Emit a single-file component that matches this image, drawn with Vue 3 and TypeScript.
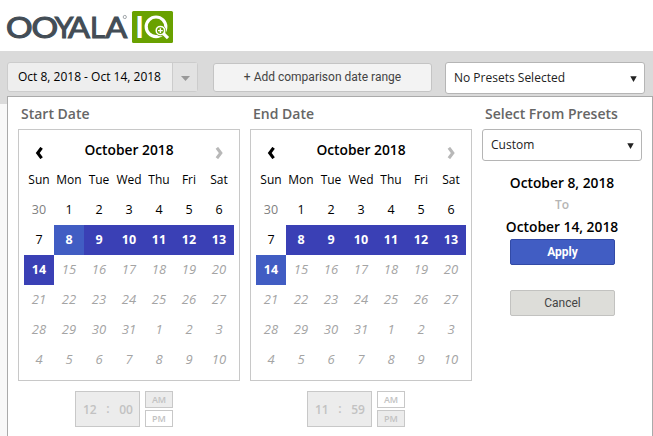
<script setup lang="ts">
interface Cell {
  label: number
  kind: 'prev' | 'day' | 'range' | 'edge' | 'off'
}
interface Calendar {
  title: string
  cells: Cell[]
  hour: string
  minute: string
  meridiem: 'AM' | 'PM'
}

const weekdays = ['Sun', 'Mon', 'Tue', 'Wed', 'Thu', 'Fri', 'Sat']

function buildCells(edge: number): Cell[] {
  const cells: Cell[] = [{ label: 30, kind: 'prev' }]
  for (let d = 1; d <= 31; d++) {
    let kind: Cell['kind'] = 'day'
    if (d === edge) kind = 'edge'
    else if (d >= 8 && d <= 14) kind = 'range'
    else if (d > 14) kind = 'off'
    cells.push({ label: d, kind })
  }
  for (let d = 1; d <= 10; d++) cells.push({ label: d, kind: 'off' })
  return cells
}

const calendars: Calendar[] = [
  { title: 'Start Date', cells: buildCells(8), hour: '12', minute: '00', meridiem: 'AM' },
  { title: 'End Date', cells: buildCells(14), hour: '11', minute: '59', meridiem: 'PM' },
]

// Wordmark letters with their own start and advance, for the wide round Os
const brand = [
  { letter: 'O', x: -0.9, width: 26.6 },
  { letter: 'O', x: 24.4, width: 26.6 },
  { letter: 'Y', x: 47.8, width: 18.6 },
  { letter: 'A', x: 61, width: 22 },
  { letter: 'L', x: 83, width: 15 },
  { letter: 'A', x: 98.2, width: 22 },
]
</script>

<template>
  <div class="page">
    <header class="header">
      <svg class="logo" width="170" height="40" viewBox="0 0 170 40">
        <text
          v-for="(b, i) in brand"
          :key="i"
          class="brand"
          :x="b.x"
          y="29.5"
          :textLength="b.width"
          lengthAdjust="spacingAndGlyphs"
        >{{ b.letter }}</text>
        <circle cx="117.800" cy="9" r="1.600" fill="none" stroke="#8b9297" stroke-width="0.800" />
        <rect x="125" y="3" width="41" height="32" rx="1.500" fill="#69a100" />
        <text class="iq" x="128.200" y="29.500">I</text>
        <circle cx="149" cy="18.800" r="9.800" fill="none" stroke="#fff" stroke-width="3.200" />
        <circle cx="153.400" cy="22.600" r="5.600" fill="#69a100" />
        <path d="M156 25.200L161 30.200" stroke="#fff" stroke-width="3.200" />
        <circle cx="153.400" cy="22.600" r="4.200" fill="#69a100" stroke="#fff" stroke-width="1.500" />
        <path d="M153.400 20.200v4.800M151 22.600h4.800" stroke="#fff" stroke-width="1.400" />
      </svg>
    </header>

    <div class="toolbar">
      <div class="range-button">
        <span class="range-text">Oct 8, 2018 - Oct 14, 2018</span>
        <span class="range-toggle">
          <svg width="9" height="5" viewBox="0 0 9 5"><path d="M0 0h9L4.500 5z" fill="#999" /></svg>
        </span>
      </div>
      <button class="compare" type="button">+ Add comparison date range</button>
      <div class="select main-select">
        <span>No Presets Selected</span>
        <svg width="7" height="6" viewBox="0 0 7 6"><path d="M.3.300h6.400L3.500 6z" fill="#222" /></svg>
      </div>
    </div>

    <main class="panel">
      <section v-for="cal in calendars" :key="cal.title" class="column">
        <h2>{{ cal.title }}</h2>
        <div class="calendar">
          <div class="month">
            <svg width="8" height="12" viewBox="0 0 8 12"><path d="M6.600 .8L2.700 6l3.900 5.200" fill="none" stroke="#000" stroke-width="3.100" /></svg>
            <span>October 2018</span>
            <svg width="8" height="12" viewBox="0 0 8 12"><path d="M1.900 .8l3.900 5.200-3.900 5.200" fill="none" stroke="#b8b8b8" stroke-width="3.100" /></svg>
          </div>
          <div class="grid">
            <span v-for="day in weekdays" :key="day" class="cell weekday">{{ day }}</span>
            <span v-for="(cell, i) in cal.cells" :key="i" class="cell date" :class="cell.kind">{{ cell.label }}</span>
          </div>
        </div>
        <div class="time">
          <div class="clock">
            <span>{{ cal.hour }}</span><span class="colon">:</span><span>{{ cal.minute }}</span>
          </div>
          <div class="meridiem">
            <span :class="{ on: cal.meridiem === 'AM' }">AM</span>
            <span :class="{ on: cal.meridiem === 'PM' }">PM</span>
          </div>
        </div>
      </section>

      <aside class="presets">
        <h2>Select From Presets</h2>
        <div class="select">
          <span>Custom</span>
          <svg width="7" height="6" viewBox="0 0 7 6"><path d="M.3.300h6.400L3.500 6z" fill="#222" /></svg>
        </div>
        <div class="summary">
          <strong>October 8, 2018</strong>
          <span class="to">To</span>
          <strong>October 14, 2018</strong>
        </div>
        <button class="action apply" type="button">Apply</button>
        <button class="action cancel" type="button">Cancel</button>
      </aside>
    </main>
  </div>
</template>

<style>
body {
  margin: 0;
  overflow: hidden;
}
</style>

<style scoped>
.page,
.page * {
  box-sizing: border-box;
}
.page {
  width: 653px;
  height: 436px;
  overflow: hidden;
  background: #f8f8f8;
  color: #000;
  font-family: 'Open Sans', sans-serif;
  font-size: 12px;
}
.header {
  height: 51px;
  padding: 8px 0 0 7px;
  background: #fff;
}
.logo {
  display: block;
  overflow: visible;
}
.brand {
  font-family: Lato, sans-serif;
  font-size: 29.5px;
  font-weight: 400;
  fill: #434d56;
  stroke: #434d56;
  stroke-width: 1.1px;
}
.iq {
  font-family: Lato, sans-serif;
  font-size: 29.5px;
  font-weight: 700;
  fill: #fff;
}
.toolbar {
  display: flex;
  align-items: flex-start;
  height: 53px;
  padding: 11px 8px 0 7px;
  background: #dadada;
}
.range-button {
  display: flex;
  width: 191px;
  height: 30px;
  border: 1px solid #ccc;
  border-radius: 3px;
  background: #eee;
}
.range-text {
  flex: 1;
  padding-left: 10px;
  line-height: 27px;
  white-space: nowrap;
}
.range-toggle {
  display: flex;
  align-items: center;
  justify-content: center;
  width: 25px;
  padding-top: 2px;
  border-left: 1px solid #ccc;
  background: #e2e2e2;
}
.compare {
  width: 219px;
  height: 29px;
  margin: 1px 0 0 15px;
  padding: 0 0 2px;
  border: 1px solid #c4c4c4;
  border-radius: 3px;
  background: #f3f3f3;
  color: #444;
  font: 12px Roboto, sans-serif;
}
.select {
  display: flex;
  align-items: center;
  justify-content: space-between;
  width: 160px;
  height: 32px;
  padding: 0 7px 0 8px;
  border: 1px solid #b5b5b5;
  border-radius: 3px;
  background: #fff;
  color: #222;
}
.select span {
  padding-bottom: 1px;
}
.select svg {
  margin-top: 2px;
}
.main-select {
  width: 200px;
  margin-left: 13px;
}
.panel {
  display: flex;
  width: 646px;
  height: 345px;
  margin: -8px 0 0 7px;
  padding: 0 10px;
  border: 1px solid #aaa;
  border-bottom: 0;
  background: #fff;
}
.column {
  width: 222px;
  margin-right: 10px;
}
h2 {
  height: 32px;
  margin: 0;
  padding-left: 3px;
  color: #666;
  font-size: 14px;
  font-weight: 600;
  line-height: 34px;
  white-space: nowrap;
}
.calendar {
  height: 252px;
  padding: 0 5px;
  border: 1px solid #c8c8c8;
}
.month {
  display: flex;
  align-items: center;
  justify-content: space-between;
  height: 35px;
  padding: 5px 11px 0;
  font-size: 13.8px;
  font-weight: 600;
}
.month span {
  padding-bottom: 1px;
}
.month svg {
  margin-top: 6px;
}
.grid {
  display: grid;
  grid-template-columns: repeat(7, 30px);
  grid-auto-rows: 30px;
}
.cell {
  line-height: 29px;
  text-align: center;
}
.date {
  font-size: 12.5px;
}
.prev {
  color: #808080;
}
.range,
.edge {
  background: #3a40b5;
  color: #fff;
  font-weight: 700;
}
.edge {
  background: #415dc3;
}
.off {
  color: #a4a4a4;
  font-size: 13px;
  font-style: italic;
}
.time {
  display: flex;
  gap: 5px;
  padding: 10px 0 0 57px;
}
.clock {
  display: flex;
  align-items: center;
  justify-content: space-between;
  width: 65px;
  height: 36px;
  padding: 0 6px 0 7px;
  border: 1px solid #c8c8c8;
  background: #ececec;
  color: #c2c2c2;
  font-weight: 600;
}
.colon {
  padding-bottom: 2px;
}
.meridiem {
  display: flex;
  flex-direction: column;
  gap: 2px;
}
.meridiem span {
  width: 28px;
  height: 17px;
  border: 1px solid #c8c8c8;
  color: #c2c2c2;
  font-size: 9px;
  font-weight: 600;
  line-height: 15px;
  text-align: center;
}
.meridiem .on {
  background: #ececec;
}
.presets {
  width: 160px;
}
.summary {
  display: flex;
  flex-direction: column;
  align-items: center;
  padding-top: 11px;
  font-size: 13.8px;
  line-height: 22px;
}
.summary strong {
  font-weight: 600;
}
.to {
  color: #b5b5b5;
  font-size: 12px;
  font-weight: 600;
}
.action {
  display: block;
  width: 105px;
  height: 26px;
  margin: 1px auto 0 28px;
  padding: 0;
  border: 1px solid #c2c2c0;
  border-radius: 2px;
  background: #ddddd9;
  color: #444;
  font: 12px Roboto, sans-serif;
}
.apply {
  border-color: #324aa6;
  background: #415dc3;
  color: #fff;
  font-weight: 700;
}
.cancel {
  margin-top: 25px;
}
</style>
